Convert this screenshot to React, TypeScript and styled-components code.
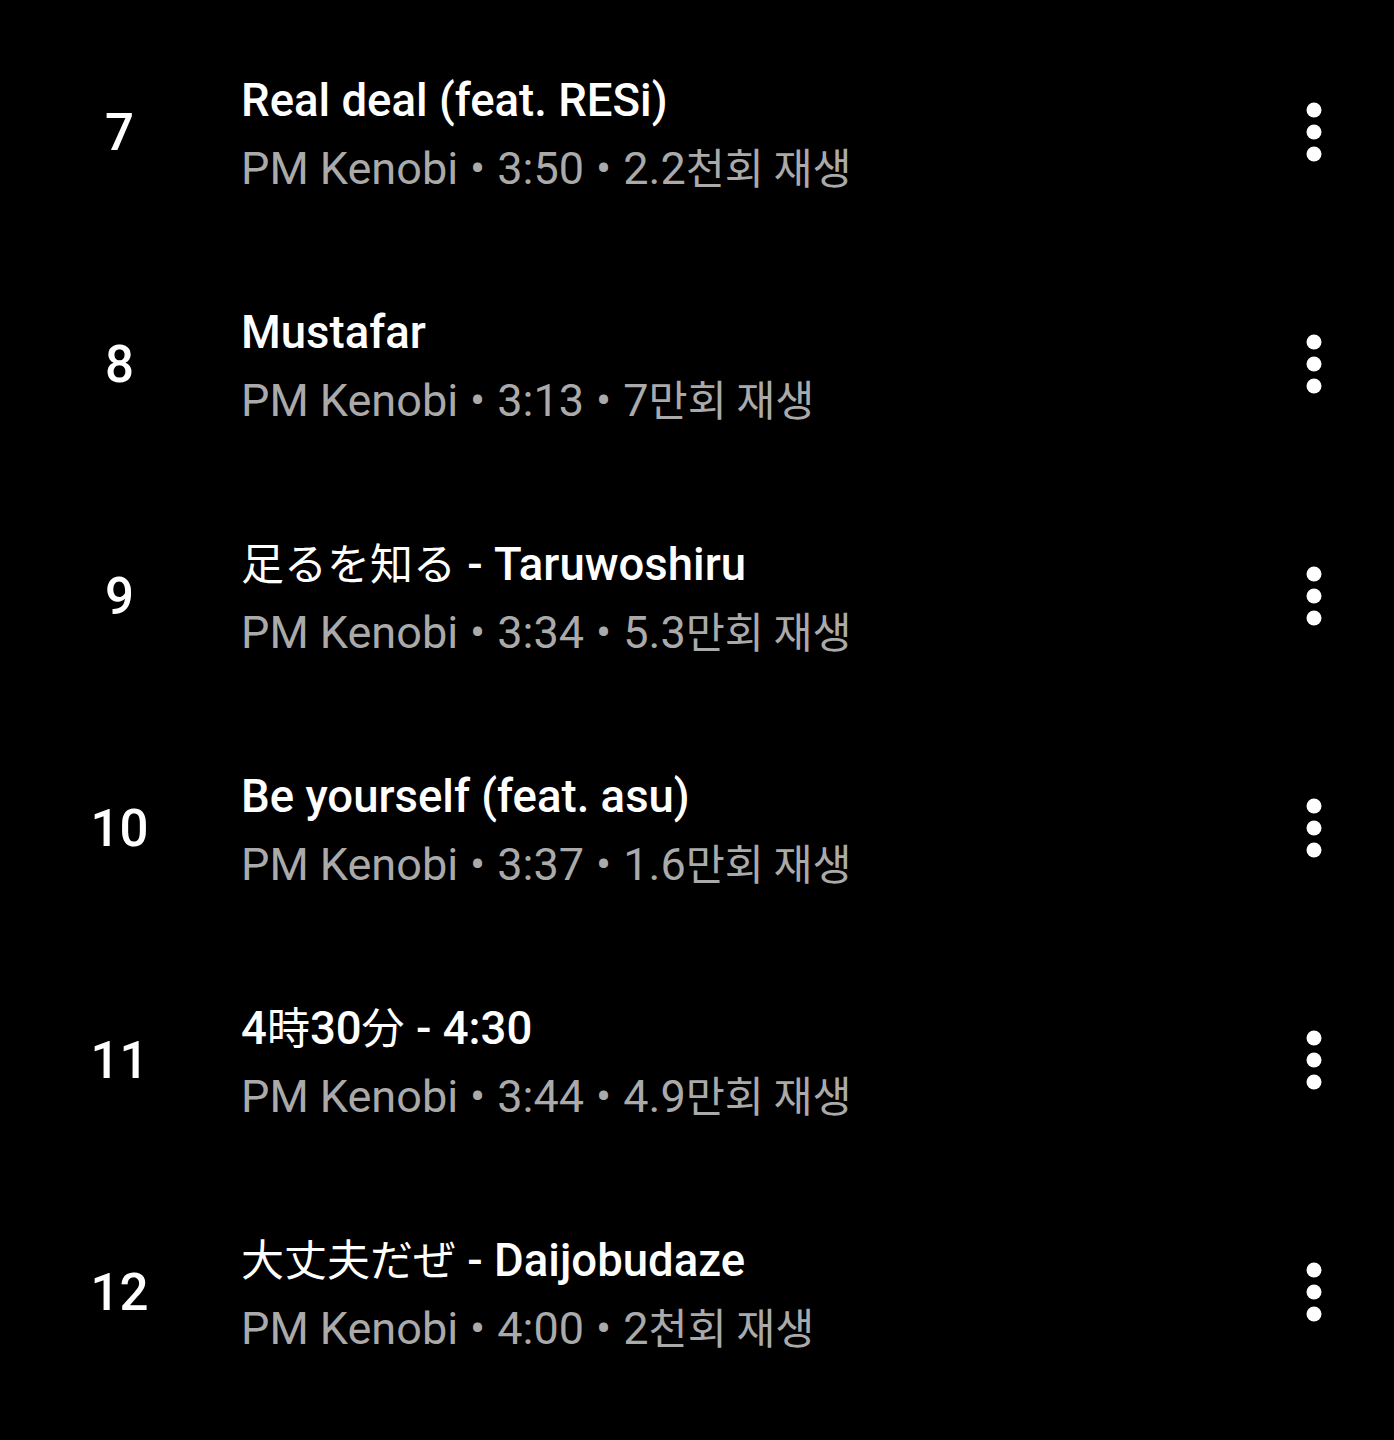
import React from "react";
import styled, { createGlobalStyle } from "styled-components";

const Global = createGlobalStyle`
  html, body { margin: 0; padding: 0; background: #000; }
  body { font-family: Roboto, "Noto Sans CJK JP", "Noto Sans CJK KR", sans-serif; }
`;

const List = styled.div`
  display: flex;
  flex-direction: column;
  padding-top: 16px;
  background: #000;
  min-height: 1440px;
  box-sizing: border-box;
`;

const Row = styled.div`
  display: grid;
  grid-template-columns: 241px 1fr 160px;
  align-items: center;
  height: 232px;
`;

const Index = styled.div`
  text-align: center;
  color: #fff;
  font-size: 51px;
  font-weight: 500;
  padding-right: 2px;
`;

const Info = styled.div`
  display: flex;
  flex-direction: column;
  padding-top: 5px;
`;

const Title = styled.div`
  color: #fff;
  font-size: 45.5px;
  font-weight: 500;
  line-height: 68px;
  height: 68px;
  white-space: nowrap;
`;

const Cjk = styled.span`
  font-family: "Noto Sans CJK JP", sans-serif;
  font-weight: 400;
  font-size: 43px;
  line-height: 1;
`;

const Meta = styled.div`
  color: #aaaaaa;
  font-size: 45px;
  font-weight: 400;
  line-height: 68px;
  height: 68px;
  white-space: nowrap;
`;

const Hangul = styled.span`
  font-family: "Noto Sans CJK KR", sans-serif;
  font-size: 42.5px;
  line-height: 1;
`;

const Sep = styled.span`
  margin: 0 12px;
`;

const MoreButton = styled.div`
  display: flex;
  justify-content: center;
  align-items: center;
  color: #fff;
`;

const Dots = () => (
  <svg width="16" height="60" viewBox="0 0 16 60">
    <circle cx="8" cy="8" r="7.5" fill="#fff" />
    <circle cx="8" cy="30" r="7.5" fill="#fff" />
    <circle cx="8" cy="52" r="7.5" fill="#fff" />
  </svg>
);

type Track = {
  n: number;
  title: React.ReactNode;
  time: string;
  count: string;
  unit: string;
};

const tracks: Track[] = [
  { n: 7, title: "Real deal (feat. RESi)", time: "3:50", count: "2.2", unit: "천회 재생" },
  { n: 8, title: "Mustafar", time: "3:13", count: "7", unit: "만회 재생" },
  {
    n: 9,
    title: (
      <>
        <Cjk>足るを知る</Cjk> - Taruwoshiru
      </>
    ),
    time: "3:34",
    count: "5.3",
    unit: "만회 재생",
  },
  { n: 10, title: "Be yourself (feat. asu)", time: "3:37", count: "1.6", unit: "만회 재생" },
  {
    n: 11,
    title: (
      <>
        4<Cjk>時</Cjk>30<Cjk>分</Cjk> - 4:30
      </>
    ),
    time: "3:44",
    count: "4.9",
    unit: "만회 재생",
  },
  {
    n: 12,
    title: (
      <>
        <Cjk>大丈夫だぜ</Cjk> - Daijobudaze
      </>
    ),
    time: "4:00",
    count: "2",
    unit: "천회 재생",
  },
];

export default function App() {
  return (
    <>
      <Global />
      <List>
        {tracks.map((t) => (
          <Row key={t.n}>
            <Index>{t.n}</Index>
            <Info>
              <Title>{t.title}</Title>
              <Meta>
                PM Kenobi<Sep>•</Sep>
                {t.time}
                <Sep>•</Sep>
                {t.count}
                <Hangul>{t.unit}</Hangul>
              </Meta>
            </Info>
            <MoreButton>
              <Dots />
            </MoreButton>
          </Row>
        ))}
      </List>
    </>
  );
}
